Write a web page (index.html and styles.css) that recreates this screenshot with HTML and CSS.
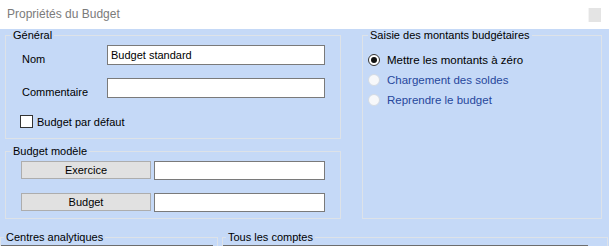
FILE: index.html
```html
<!DOCTYPE html>
<html>
<head>
	<meta http-equiv="Content-Type" content="text/html;charset=utf-8"/>
	<title>Propriétés du Budget</title>
	<link rel="stylesheet" href="styles.css">
</head>
<body>
	<div class="titlebar">
		<span class="title">Propriétés du Budget</span>
		<span class="close"></span>
	</div>
	<div class="dialog">
		<div class="main">
			<div class="leftcol">
				<fieldset class="group general">
					<legend>Général</legend>
					<div class="row">
						<label class="lbl">Nom</label>
						<div class="field">Budget standard</div>
					</div>
					<div class="row second">
						<label class="lbl">Commentaire</label>
						<div class="field"></div>
					</div>
					<div class="check">
						<span class="box"></span>
						<span>Budget par défaut</span>
					</div>
				</fieldset>
				<fieldset class="group model">
					<legend>Budget modèle</legend>
					<div class="brow">
						<span class="btn">Exercice</span>
						<div class="field"></div>
					</div>
					<div class="brow second">
						<span class="btn">Budget</span>
						<div class="field"></div>
					</div>
				</fieldset>
			</div>
			<fieldset class="group saisie">
				<legend>Saisie des montants budgétaires</legend>
				<div class="radio on"><span class="dot"></span><span>Mettre les montants à zéro</span></div>
				<div class="radio off"><span class="dot"></span><span>Chargement des soldes</span></div>
				<div class="radio off"><span class="dot"></span><span>Reprendre le budget</span></div>
			</fieldset>
		</div>
		<div class="bottom">
			<fieldset class="group low centres">
				<legend>Centres analytiques</legend>
				<div class="grid"></div>
			</fieldset>
			<fieldset class="group low comptes">
				<legend>Tous les comptes</legend>
				<div class="grid"></div>
			</fieldset>
		</div>
	</div>
</body>
</html>
```

FILE: styles.css
```css
*{
	margin: 0;
	padding: 0;
	box-sizing: border-box;
}
body{
	width: 609px;
	height: 246px;
	overflow: hidden;
	font-family: "Liberation Sans", Arial, sans-serif;
	font-size: 11px;
	color: #000;
	background: #c5d9f7;
}
.titlebar{
	height: 29px;
	background: #fff;
	display: flex;
	align-items: center;
	justify-content: space-between;
	padding: 0 8px 0 7px;
}
.title{
	font-size: 12px;
	color: #7b7b7b;
	margin-top: -1px;
}
.close{
	width: 13px;
	height: 14px;
	background: #e4e4e4;
	margin-top: 1px;
	border-left: 1px solid #f4f4f4;
}
.main{
	display: flex;
	padding-left: 5px;
	gap: 21px;
}
.leftcol{
	display: flex;
	flex-direction: column;
	gap: 6px;
	width: 336px;
}
.group{
	border: 1px solid #dde2e8;
	padding: 0 5px;
}
.group legend{
	padding: 0 2px;
	line-height: 12px;
}
.general{
	height: 110px;
	padding-top: 4px;
}
.row{
	display: grid;
	grid-template-columns: 96px 218px;
	align-items: start;
	height: 20px;
}
.row.second{
	margin-top: 13px;
}
.lbl{
	padding-left: 11px;
	padding-top: 9px;
	line-height: 11px;
}
.field{
	height: 20px;
	background: #fff;
	border: 1px solid #7a7a7a;
	padding: 2px 3px;
	line-height: 14px;
}
.check{
	display: flex;
	align-items: center;
	gap: 4px;
	margin: 17px 0 0 9px;
}
.box{
	width: 13px;
	height: 13px;
	background: #fff;
	border: 1px solid #333;
}
.model{
	height: 74px;
	padding-top: 4px;
}
.brow{
	display: flex;
	gap: 3px;
	margin-left: 10px;
}
.brow.second{
	margin-top: 13px;
}
.brow .field{
	width: 171px;
	height: 19px;
}
.btn{
	width: 130px;
	height: 18px;
	background: #e1e1e1;
	border: 1px solid #adadad;
	text-align: center;
	line-height: 17px;
}
.saisie{
	width: 240px;
	height: 190px;
	padding-top: 9px;
}
.radio{
	display: flex;
	align-items: center;
	gap: 7px;
	height: 20px;
	font-size: 11.5px;
}
.radio .dot{
	width: 12px;
	height: 12px;
	border-radius: 50%;
	background: #fff;
	position: relative;
}
.radio.on .dot{
	border: 1px solid #333;
}
.radio.on .dot::after{
	content: "";
	position: absolute;
	left: 2px;
	top: 2px;
	width: 6px;
	height: 6px;
	border-radius: 50%;
	background: #111;
}
.radio.off .dot{
	border: 1px solid #d4dbe4;
	background: #f7f8fa;
}
.radio.off{
	color: #27479c;
}
.bottom{
	display: flex;
	gap: 4px;
	margin-top: 12px;
}
.low{
	padding: 2px 0 0;
	height: 80px;
}
.low legend{
	margin-left: 3px;
}
.centres{
	width: 218px;
}
.comptes{
	width: 386px;
}
.grid{
	height: 60px;
	border-top: 1px solid #6d6d6d;
	background: #c5d9f7;
}
.centres .grid{
	margin-right: 4px;
}
.comptes .grid{
	margin-right: 19px;
}
```
